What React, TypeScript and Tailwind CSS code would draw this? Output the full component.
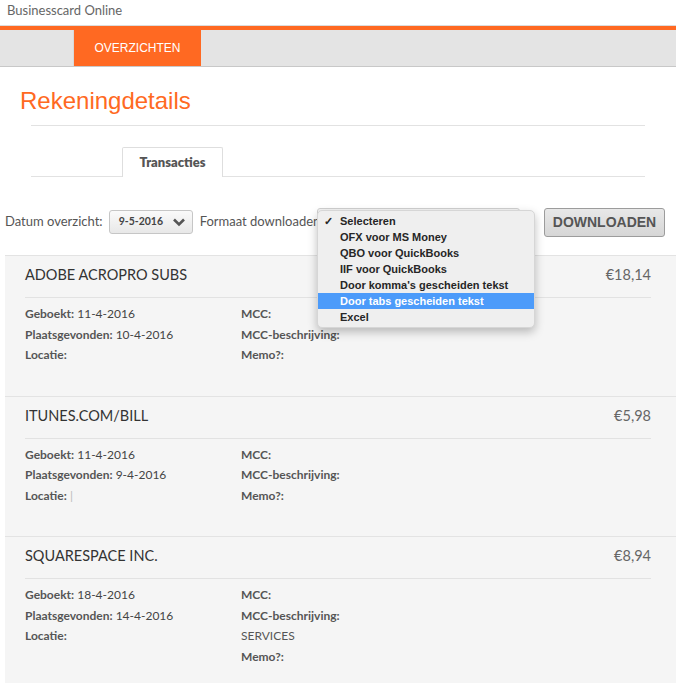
import React from 'react';

const sans = { fontFamily: 'Lato, "Open Sans", sans-serif' };
const arial = { fontFamily: '"Liberation Sans", Arial, sans-serif' };

type Tx = {
  name: string;
  amount: string;
  booked: string;
  found: string;
  location?: string;
  mccDesc?: string;
};

const txs: Tx[] = [
  { name: 'ADOBE ACROPRO SUBS', amount: '€18,14', booked: '11-4-2016', found: '10-4-2016' },
  { name: 'ITUNES.COM/BILL', amount: '€5,98', booked: '11-4-2016', found: '9-4-2016', location: '|' },
  { name: 'SQUARESPACE INC.', amount: '€8,94', booked: '18-4-2016', found: '14-4-2016', mccDesc: 'SERVICES' },
];

const formats = [
  'Selecteren',
  'OFX voor MS Money',
  'QBO voor QuickBooks',
  'IIF voor QuickBooks',
  "Door komma's gescheiden tekst",
  'Door tabs gescheiden tekst',
  'Excel',
];

const Card: React.FC<{ tx: Tx }> = ({ tx }) => (
  <div className="bg-[#f5f5f5] border-t border-[#e3e3e3] pl-5 pr-[25px] pt-[9px] pb-[30px] text-[#444]" style={sans}>
    <div className="flex justify-between items-center h-[20px] text-[14.5px]">
      <span className="text-[#333]">{tx.name}</span>
      <span className="text-[#666]">{tx.amount}</span>
    </div>
    <div className="border-b border-[#e2e2e2] mt-[12px] mb-[6px]" />
    <div className="grid grid-cols-[216px_1fr] text-[12px] leading-[20.5px]">
      <div>
        <div><b className="text-[#555]">Geboekt:</b> {tx.booked}</div>
        <div><b className="text-[#555]">Plaatsgevonden:</b> {tx.found}</div>
        <div>
          <b className="text-[#555]">Locatie:</b>{' '}
          {tx.location && <span className="text-[#bbb]">{tx.location}</span>}
        </div>
      </div>
      <div className="text-[#555]">
        <div><b>MCC:</b></div>
        <div><b>MCC-beschrijving:</b></div>
        {tx.mccDesc && <div>{tx.mccDesc}</div>}
        <div><b>Memo?:</b></div>
      </div>
    </div>
  </div>
);

const App: React.FC = () => {
  return (
    <div className="w-[676px] h-[683px] overflow-hidden bg-white relative">
      <div className="h-[26px] flex items-center pl-[7px] pb-[3px] text-[13px] text-[#666] border-b border-[#dcdcdc]" style={sans}>
        Businesscard Online
      </div>
      <div className="h-[4px] bg-[#ff6922]" />
      <div className="h-[37px] bg-[#e4e4e4] border-b border-[#c8c8c8] flex">
        <div className="ml-[73px] w-[128px] h-[36px] bg-[#ff6922] border-l border-[#d8d8d8] text-white text-[12px] flex items-center justify-center" style={arial}>
          OVERZICHTEN
        </div>
      </div>

      <div className="pl-[20px] pt-[19px] h-[58px] text-[#ff6922] text-[24px] leading-[30px]" style={arial}>
        Rekeningdetails
      </div>
      <div className="mx-[31px] border-b border-[#e2e2e2] w-[614px]" />

      <div className="mx-[31px] w-[614px] mt-[21px] flex items-end border-b border-[#e2e2e2]">
        <div className="ml-[91px] w-[101px] h-[30px] border border-b-0 border-[#dedede] rounded-t-[2px] bg-white flex items-center justify-center text-[13px] font-extrabold text-[#555] -mb-px" style={sans}>
          Transacties
        </div>
      </div>

      <div className="flex items-center h-[30px] mt-[30px] pl-[5px] text-[13px] text-[#555]" style={sans}>
        <span>Datum overzicht:</span>
        <div className="ml-[6px] w-[84px] h-[24px] rounded-[3px] border border-[#c6c6c6] bg-gradient-to-b from-[#fafafa] to-[#e8e8e8] flex items-center justify-between pl-[9px] pr-[6px]">
          <span className="text-[10.5px] font-bold text-[#444]">9-5-2016</span>
          <svg width="14" height="10" viewBox="0 0 14 10">
            <path d="M2 2.5 L7 7.5 L12 2.5" fill="none" stroke="#555" strokeWidth="2.6" />
          </svg>
        </div>
        <span className="ml-[7px]">Formaat downloaden</span>
        <div className="ml-auto mr-[11px] w-[121px] h-[29px] rounded-[3px] border border-[#9c9c9c] bg-gradient-to-b from-[#e8e8e8] to-[#d6d6d6] flex items-center justify-center text-[14px] font-bold text-[#555]" style={arial}>
          DOWNLOADEN
        </div>
      </div>

      <div className="mt-[18px] ml-[5px]">
        {txs.map((tx) => (
          <Card key={tx.name} tx={tx} />
        ))}
      </div>

      {/* closed select sitting under the opened native menu */}
      <div className="absolute left-[317px] top-[208px] w-[203px] h-[24px] rounded-[3px] border border-[#d0d0d0] bg-[#f4f4f4]" />

      {/* native select menu opened */}
      <div className="absolute left-[317px] top-[210px] w-[218px] rounded-[5px] bg-[#efefef] border border-[#d6d6d6] shadow-[0_4px_10px_rgba(0,0,0,0.25)] py-[2px] text-[11px] font-bold text-[#262626]" style={arial}>
        {formats.map((f, i) => (
          <div
            key={f}
            className={`h-[16px] flex items-center pl-[22px] relative ${i === 5 ? 'bg-[#4c9bfa] text-white' : ''}`}
          >
            {i === 0 && <span className="absolute left-[6px] text-[11px]">✓</span>}
            {f}
          </div>
        ))}
      </div>
    </div>
  );
};

export default App;
